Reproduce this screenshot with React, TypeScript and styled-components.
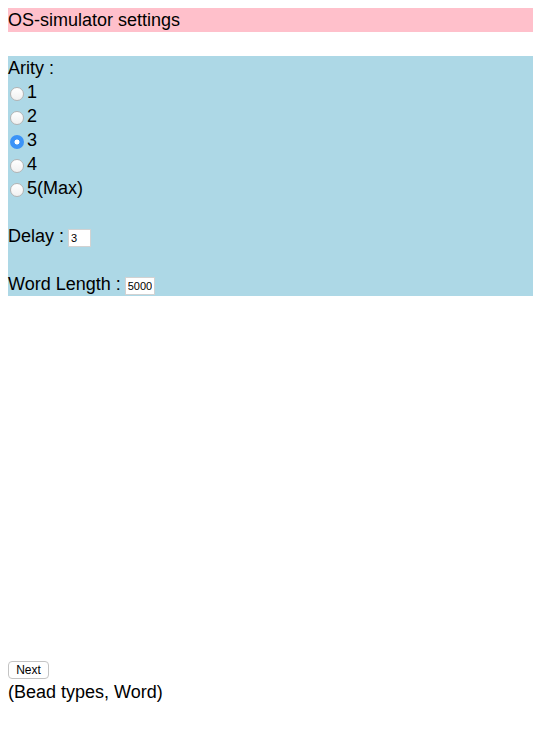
import React, { useState } from "react";
import styled, { createGlobalStyle } from "styled-components";

const Global = createGlobalStyle`
  html, body { background: #fff; }
  body {
    margin: 8px 0 8px 8px;
    font-family: "Liberation Sans", Arial, sans-serif;
    font-size: 18px;
    line-height: 24px;
    color: #000;
  }
`;

const Header = styled.div`
  background: pink;
  height: 24px;
  line-height: 24px;
  margin-bottom: 24px;
`;

const Settings = styled.div`
  background: lightblue;
  display: flex;
  flex-direction: column;
`;

const Line = styled.div<{ $gapBefore?: boolean }>`
  height: 24px;
  display: flex;
  align-items: center;
  margin-top: ${(p) => (p.$gapBefore ? "24px" : "0")};
  white-space: nowrap;
`;

const RadioLabel = styled.label`
  display: flex;
  align-items: center;
  height: 24px;
  cursor: pointer;
`;

const Radio = styled.input`
  appearance: none;
  width: 14px;
  height: 14px;
  margin: 4px 3px 0 2px;
  border-radius: 50%;
  border: 1px solid #b4b4b4;
  background: linear-gradient(#fff, #f0f0f0);
  box-sizing: border-box;
  flex: none;
  position: relative;
  &:checked {
    border: none;
    background: radial-gradient(circle, #fff 0 2.2px, #3b93f7 2.8px);
  }
`;

const NumInput = styled.input<{ $w: number }>`
  width: ${(p) => p.$w}px;
  height: 18px;
  box-sizing: border-box;
  margin: 3px 0 0 4px;
  padding: 0 2px;
  border: 1px solid #d2d2d2;
  background: #fff;
  font-family: "Liberation Sans", Arial, sans-serif;
  font-size: 11px;
  color: #000;
  outline: none;
`;

const Spacer = styled.div`
  height: 360px;
`;

const ButtonLine = styled.div`
  height: 24px;
  display: flex;
  align-items: center;
`;

const NextButton = styled.button`
  width: 41px;
  height: 18px;
  padding: 0;
  border: 1px solid #c4c4c4;
  border-radius: 4px;
  background: #fff;
  font-family: "Liberation Sans", Arial, sans-serif;
  font-size: 12px;
  line-height: 16px;
  color: #000;
  margin-top: 4px;
`;

const Caption = styled.div`
  height: 24px;
  line-height: 24px;
`;

export default function App() {
  const [arity, setArity] = useState(3);
  const options = ["1", "2", "3", "4", "5(Max)"];
  return (
    <>
      <Global />
      <Header>OS-simulator settings</Header>
      <Settings>
        <Line>Arity :</Line>
        {options.map((o, i) => (
          <RadioLabel key={o}>
            <Radio
              type="radio"
              name="arity"
              checked={arity === i + 1}
              onChange={() => setArity(i + 1)}
            />
            {o}
          </RadioLabel>
        ))}
        <Line $gapBefore>
          Delay :<NumInput $w={23} defaultValue="3" />
        </Line>
        <Line $gapBefore>
          Word Length :<NumInput $w={30} defaultValue="5000" />
        </Line>
      </Settings>
      <Spacer />
      <ButtonLine>
        <NextButton>Next</NextButton>
      </ButtonLine>
      <Caption>(Bead types, Word)</Caption>
    </>
  );
}
